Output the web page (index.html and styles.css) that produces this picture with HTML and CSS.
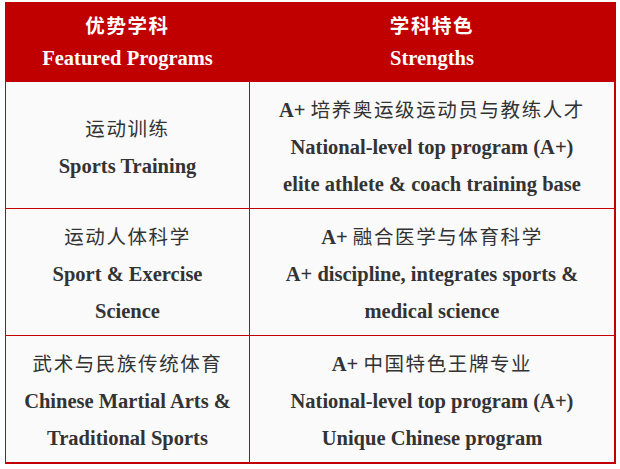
FILE: index.html
```html
<!DOCTYPE html>
<html lang="zh">
<head>
<meta charset="utf-8">
<title>优势学科</title>
<link rel="stylesheet" href="styles.css">
</head>
<body>
<table class="programs">
  <colgroup><col class="col-a"><col class="col-b"></colgroup>
  <thead>
    <tr>
      <th><span class="zh">优势学科</span><br>Featured Programs</th>
      <th><span class="zh">学科特色</span><br>Strengths</th>
    </tr>
  </thead>
  <tbody>
    <tr>
      <td><span class="zh">运动训练</span><br><b>Sports Training</b></td>
      <td><b>A+</b> <span class="zh">培养奥运级运动员与教练人才</span><br><b>National-level top program (A+)</b><br><b>elite athlete &amp; coach training base</b></td>
    </tr>
    <tr>
      <td><span class="zh">运动人体科学</span><br><b>Sport &amp; Exercise<br>Science</b></td>
      <td><b>A+</b> <span class="zh">融合医学与体育科学</span><br><b>A+ discipline, integrates sports &amp;<br>medical science</b></td>
    </tr>
    <tr>
      <td><span class="zh">武术与民族传统体育</span><br><b>Chinese Martial Arts &amp;<br>Traditional Sports</b></td>
      <td><b>A+</b> <span class="zh">中国特色王牌专业</span><br><b>National-level top program (A+)</b><br><b>Unique Chinese program</b></td>
    </tr>
  </tbody>
</table>
</body>
</html>
```
FILE: styles.css
```css
html, body {
  background: #ffffff;
}
body {
  margin: 0;
  padding: 2px 4px 0 5px;
  font-family: "Liberation Serif", "Times New Roman", "Noto Sans CJK SC", serif;
  color: #333333;
}
.programs {
  width: 611px;
  border-collapse: collapse;
  table-layout: fixed;
  border-right: 2px solid #c00000;
  border-bottom: 2px solid #c00000;
}
.col-a { width: 244px; }
.programs th {
  background: #c00000;
  color: #ffffff;
  font-size: 20.5px;
  font-weight: bold;
  line-height: 32px;
  padding: 7px 2px 7px;
  border: 1px solid #c00000;
  text-align: center;
}
.programs td {
  background: #fafafa;
  font-size: 20.5px;
  line-height: 37px;
  padding: 10px 2px 5px;
  border: 1px solid #c00000;
  text-align: center;
  vertical-align: middle;
}
.zh {
  font-family: "Noto Sans CJK SC", sans-serif;
  font-size: 19.5px;
  line-height: 20px;
  letter-spacing: 1.6px;
  font-weight: normal;
}
th .zh {
  font-weight: bold;
}
b {
  font-weight: bold;
}
```
